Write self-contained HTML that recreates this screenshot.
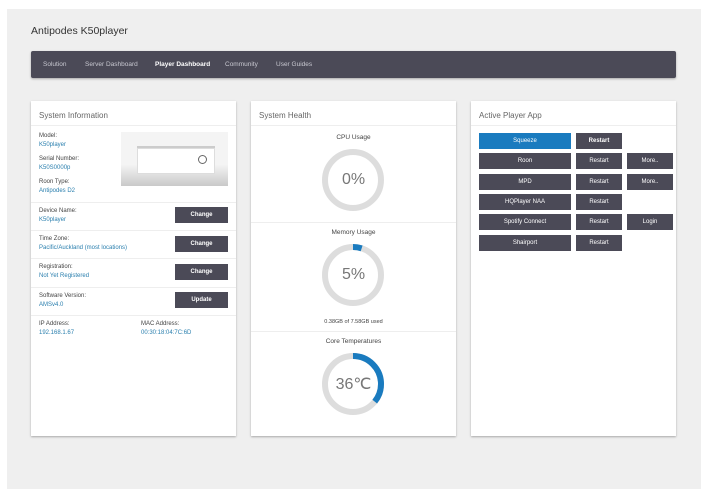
<!DOCTYPE html>
<html><head><style>
*{box-sizing:border-box;margin:0;padding:0}
body{width:713px;height:496px;background:#fff;font-family:"Liberation Sans",sans-serif;position:relative;overflow:hidden}
.bg{position:absolute;left:7px;top:9px;width:694px;height:480px;background:#efefef}
.title{position:absolute;left:31px;top:25px;font-size:10.5px;color:#333}
.nav{position:absolute;left:31px;top:51px;width:645px;height:27px;background:#4b4a57;border-radius:2px;box-shadow:0 1px 2px rgba(0,0,0,.3)}
.nav span{position:absolute;top:10px;font-size:6.5px;color:#c8c8d0}
.card{position:absolute;top:101px;width:205px;height:335px;background:#fff;box-shadow:0 1px 2px rgba(0,0,0,.3)}
.ch{height:25px;border-bottom:1px solid #eee;font-size:8px;color:#666;padding:10px 0 0 8px}
.a{position:absolute;font-size:6px;color:#444}
.b{position:absolute;font-size:6px;color:#2a7fae}
.btn{position:absolute;background:#4b4a57;color:#fff;font-size:6px;font-weight:bold;text-align:center;line-height:16px;height:16px}
.sep{position:absolute;left:0;width:205px;height:1px;background:#eee}
.img{position:absolute;left:90px;top:31px;width:107px;height:54px;background:linear-gradient(#f4f4f4 60%,#c9c9c9)}
.pb{position:absolute;background:#4b4a57;color:#fff;font-size:6px;text-align:center;line-height:16px;height:16px}
.lab{position:absolute;left:0;width:205px;text-align:center;font-size:6.5px;color:#444}
</style></head><body>
<div class="bg"></div>
<div class="title">Antipodes K50player</div>
<div class="nav">
<span style="left:12px">Solution</span><span style="left:54px">Server Dashboard</span><span style="left:124px;color:#fff;font-weight:bold">Player Dashboard</span><span style="left:194px">Community</span><span style="left:245px">User Guides</span>
</div>

<div class="card" style="left:31px">
<div class="ch">System Information</div>
<div class="a" style="left:8px;top:32px">Model:</div><div class="b" style="left:8px;top:41px">K50player</div>
<div class="a" style="left:8px;top:55px">Serial Number:</div><div class="b" style="left:8px;top:64px">K50S0000p</div>
<div class="a" style="left:8px;top:78px">Roon Type:</div><div class="b" style="left:8px;top:87px">Antipodes D2</div>
<div class="img"><div style="position:absolute;left:16px;top:16px;width:78px;height:26px;background:#fff;border:1px solid #ddd;box-shadow:0 -2px 0 #ccc"></div><div style="position:absolute;left:77px;top:23px;width:9px;height:9px;border:1px solid #666;border-radius:50%"></div></div>
<div class="sep" style="top:101px"></div>
<div class="a" style="left:8px;top:107px">Device Name:</div><div class="b" style="left:8px;top:116px">K50player</div>
<div class="btn" style="left:144px;top:106px;width:53px">Change</div>
<div class="sep" style="top:129px"></div>
<div class="a" style="left:8px;top:135px">Time Zone:</div><div class="b" style="left:8px;top:144px">Pacific/Auckland (most locations)</div>
<div class="btn" style="left:144px;top:135px;width:53px">Change</div>
<div class="sep" style="top:157px"></div>
<div class="a" style="left:8px;top:163px">Registration:</div><div class="b" style="left:8px;top:172px">Not Yet Registered</div>
<div class="btn" style="left:144px;top:163px;width:53px">Change</div>
<div class="sep" style="top:186px"></div>
<div class="a" style="left:8px;top:192px">Software Version:</div><div class="b" style="left:8px;top:201px">AMSv4.0</div>
<div class="btn" style="left:144px;top:191px;width:53px">Update</div>
<div class="sep" style="top:214px"></div>
<div class="a" style="left:8px;top:220px">IP Address:</div><div class="b" style="left:8px;top:229px">192.168.1.67</div>
<div class="a" style="left:110px;top:220px">MAC Address:</div><div class="b" style="left:110px;top:229px">00:30:18:04:7C:6D</div>
</div>

<div class="card" style="left:251px">
<div class="ch">System Health</div>
<div class="lab" style="top:33px">CPU Usage</div>
<svg style="position:absolute;left:70px;top:47px" width="64" height="64"><circle cx="32" cy="32" r="28" fill="none" stroke="#ddd" stroke-width="6"/></svg>
<div class="lab" style="top:70px;font-size:16px;color:#777">0%</div>
<div class="sep" style="top:121px"></div>
<div class="lab" style="top:128px">Memory Usage</div>
<svg style="position:absolute;left:70px;top:142px" width="64" height="64"><circle cx="32" cy="32" r="28" fill="none" stroke="#ddd" stroke-width="6"/><circle cx="32" cy="32" r="28" fill="none" stroke="#1a7bbf" stroke-width="6" stroke-dasharray="8.8 200" transform="rotate(-90 32 32)"/></svg>
<div class="lab" style="top:165px;font-size:16px;color:#777">5%</div>
<div class="lab" style="top:218px;font-size:5.5px">0.38GB of 7.58GB used</div>
<div class="sep" style="top:230px"></div>
<div class="lab" style="top:237px">Core Temperatures</div>
<svg style="position:absolute;left:70px;top:251px" width="64" height="64"><circle cx="32" cy="32" r="28" fill="none" stroke="#ddd" stroke-width="6"/><circle cx="32" cy="32" r="28" fill="none" stroke="#1a7bbf" stroke-width="6" stroke-dasharray="63 200" transform="rotate(-90 32 32)"/></svg>
<div class="lab" style="top:273px;font-size:16px;color:#777">36℃</div>
</div>

<div class="card" style="left:471px">
<div class="ch">Active Player App</div>
<div class="pb" style="left:8px;top:32px;width:92px;background:#1a7bbf">Squeeze</div><div class="pb" style="left:105px;top:32px;width:46px;font-weight:bold">Restart</div>
<div class="pb" style="left:8px;top:52px;width:92px">Roon</div><div class="pb" style="left:105px;top:52px;width:46px">Restart</div><div class="pb" style="left:156px;top:52px;width:46px">More..</div>
<div class="pb" style="left:8px;top:73px;width:92px">MPD</div><div class="pb" style="left:105px;top:73px;width:46px">Restart</div><div class="pb" style="left:156px;top:73px;width:46px">More..</div>
<div class="pb" style="left:8px;top:93px;width:92px">HQPlayer NAA</div><div class="pb" style="left:105px;top:93px;width:46px">Restart</div>
<div class="pb" style="left:8px;top:113px;width:92px">Spotify Connect</div><div class="pb" style="left:105px;top:113px;width:46px">Restart</div><div class="pb" style="left:156px;top:113px;width:46px">Login</div>
<div class="pb" style="left:8px;top:134px;width:92px">Shairport</div><div class="pb" style="left:105px;top:134px;width:46px">Restart</div>
</div>
</body></html>
